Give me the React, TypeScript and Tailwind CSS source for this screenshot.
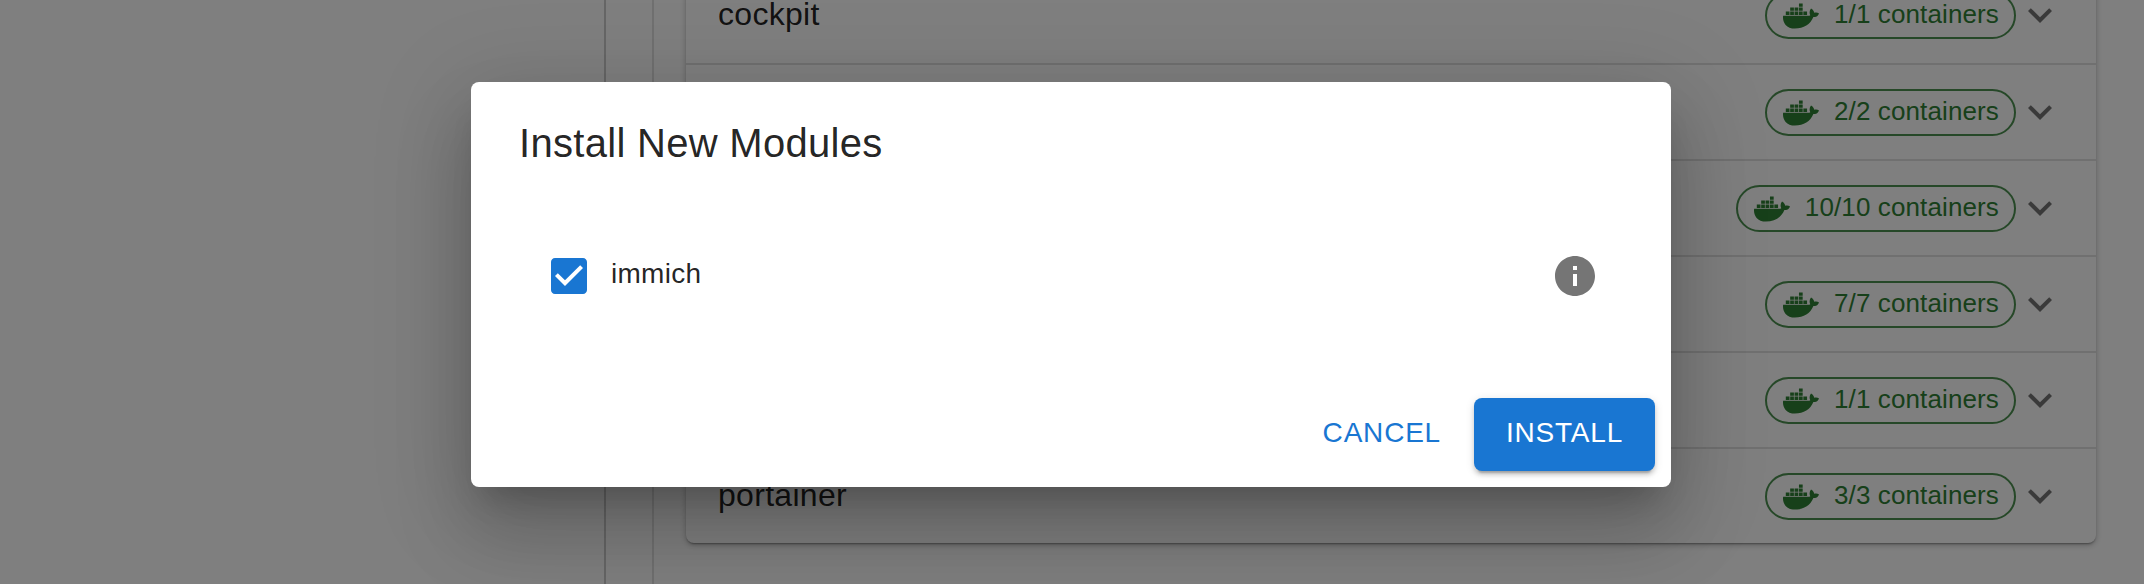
import { FaDocker } from "react-icons/fa";

const rows = [
  { name: "cockpit", count: "1/1" },
  { name: "", count: "2/2" },
  { name: "", count: "10/10" },
  { name: "", count: "7/7" },
  { name: "", count: "1/1" },
  { name: "portainer", count: "3/3" },
];

const ModuleRow = ({ name, count }: { name: string; count: string }) => {
  return (
    <div className="h-[96px] flex items-center justify-between pl-[32px] pr-[32px] border-t-2 border-black/12 first:border-t-0">
      <span className="text-[32px] leading-[36px] -mt-[2px] tracking-[0.3px] text-black/87">{name}</span>
      <div className="flex items-center">
        <div className="h-[47px] mt-[1px] flex items-center rounded-full border-2 border-[#2e7d32]/85 text-[#2f8034] pl-[16px] pr-[15px]">
          <FaDocker size={36} className="mr-[15px]" />
          <span className="text-[26px] leading-none -mt-[3px] tracking-[0.12px]">{count} containers</span>
        </div>
        <svg width="48" height="48" viewBox="0 0 24 24" className="fill-black/54">
          <path d="M16.59 8.59 12 13.17 7.41 8.59 6 10l6 6 6-6z" />
        </svg>
      </div>
    </div>
  );
};

export default function App() {
  return (
    <div className="relative w-[2144px] h-[584px] overflow-hidden bg-white font-['Liberation_Sans',Arial,sans-serif]">
      <div className="flex h-full">
        <div className="w-[606px] shrink-0 border-r-2 border-black/20" />
        <div className="w-[48px] shrink-0 border-r-2 border-black/12" />
        <div className="flex-1 pl-[32px] pr-[48px]">
          <div className="-mt-[33px] rounded-lg bg-white shadow-[0_2px_2px_-1px_rgba(0,0,0,0.35),0_2px_6px_0_rgba(0,0,0,0.14),0_2px_6px_0_rgba(0,0,0,0.12)]">
            {rows.map((row, i) => (
              <ModuleRow key={i} name={row.name} count={row.count} />
            ))}
          </div>
        </div>
      </div>

      <div className="absolute inset-0 bg-black/50 flex justify-center items-start pt-[82px]">
        <div className="w-[1200px] h-[405px] -translate-x-px flex flex-col rounded-lg bg-white shadow-[0_22px_30px_-14px_rgba(0,0,0,0.2),0_48px_76px_6px_rgba(0,0,0,0.14),0_18px_92px_16px_rgba(0,0,0,0.12)]">
          <h2 className="pt-[29px] px-[48px] text-[40px] leading-[64px] tracking-[0.3px] font-normal text-black/87">
            Install New Modules
          </h2>
          <div className="mt-[77px] flex items-center pl-[74px] pr-[72px]">
            <svg width="48" height="48" viewBox="0 0 24 24" className="fill-[#1976d2]">
              <path d="M19 3H5c-1.11 0-2 .9-2 2v14c0 1.1.89 2 2 2h14c1.11 0 2-.9 2-2V5c0-1.1-.89-2-2-2zm-9 14l-5-5 1.41-1.41L10 14.17l7.59-7.59L19 8l-9 9z" />
            </svg>
            <span className="ml-[18px] -mt-[4px] flex-1 text-[28px] tracking-[0.26px] text-black/87">immich</span>
            <svg width="48" height="48" viewBox="0 0 24 24" className="fill-[#757575]">
              <path d="M12 2C6.48 2 2 6.48 2 12s4.48 10 10 10 10-4.48 10-10S17.52 2 12 2zm1 15h-2v-6h2v6zm0-8h-2V7h2v2z" />
            </svg>
          </div>
          <div className="mt-auto flex items-center justify-end gap-[33px] pr-[16px] pb-[16px]">
            <button className="text-[28px] leading-[70px] pb-[3px] tracking-[0.8px] text-[#1976d2]">CANCEL</button>
            <button className="w-[181px] h-[73px] pb-[3px] rounded-lg bg-[#1976d2] text-white text-[28px] tracking-[0.8px] shadow-[0_6px_2px_-4px_rgba(0,0,0,0.2),0_4px_4px_0_rgba(0,0,0,0.14),0_2px_10px_0_rgba(0,0,0,0.12)]">
              INSTALL
            </button>
          </div>
        </div>
      </div>
    </div>
  );
}
